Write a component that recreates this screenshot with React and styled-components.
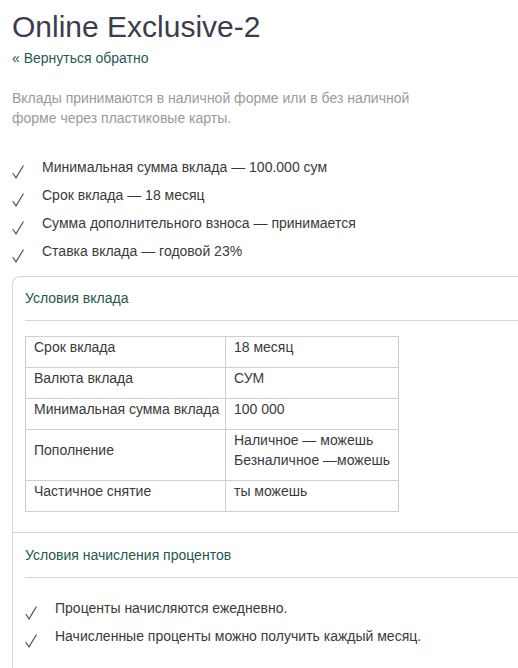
import React from "react";
import styled, { createGlobalStyle } from "styled-components";

const GlobalStyle = createGlobalStyle`
    html, body {
        margin: 0;
        padding: 0;
        background: #fff;
        overflow: hidden;
    }
    body {
        font-family: "Liberation Sans", Arial, sans-serif;
        font-size: 14px;
        color: #333;
    }
`;

const Page = styled.div`
    padding: 10px 0 20px 12px;
`;

const Title = styled.h1`
    margin: 0;
    font-size: 30px;
    line-height: 33px;
    font-weight: normal;
    color: #3c3c4c;
`;

const BackLink = styled.a`
    display: block;
    margin-top: 5px;
    font-size: 14px;
    line-height: 20px;
    color: #1f5b54;
    text-decoration: none;
`;

const Lead = styled.p`
    margin: 20px 0 0;
    max-width: 400px;
    font-size: 14px;
    line-height: 20px;
    color: #9a9a9a;
`;

const CheckList = styled.ul`
    list-style: none;
    margin: ${(p) => p.$margin || "0"};
    padding: 0;
`;

const CheckItem = styled.li`
    display: flex;
    align-items: flex-start;
    gap: 18px;
    height: 28px;
    font-size: 14px;
    line-height: 20px;
    color: #3a3a3a;
`;

const CheckIcon = styled.svg`
    flex: none;
    width: 12px;
    height: 14px;
    margin-top: 8px;
`;

const Check = () => (
    <CheckIcon viewBox="0 0 12 14">
        <path
            d="M1 8.5 L4 12.8 L11.2 1"
            fill="none"
            stroke="#4f4a78"
            strokeWidth="1.2"
            strokeLinecap="round"
        />
    </CheckIcon>
);

const Panel = styled.div`
    margin-top: 7px;
    margin-right: -40px;
    border: 1px solid #d6d6d6;
    border-right: none;
    border-radius: 8px 0 0 0;
`;

const Section = styled.div`
    padding: 0 0 0 12px;
    & + & {
        border-top: 1px solid #d6d6d6;
        padding-top: 1px;
    }
`;

const SectionHead = styled.div`
    padding: 11px 0 12px;
    border-bottom: 1px solid #d4d4d4;
    font-size: 14px;
    line-height: 20px;
    color: #24574f;
`;

const SectionBody = styled.div`
    padding: ${(p) => p.$pad || "15px 0 20px"};
`;

const Table = styled.table`
    border-collapse: collapse;
    table-layout: fixed;
    width: 374px;
`;

const Cell = styled.td`
    border: 1px solid #cfcfcf;
    padding: 0 6px 10px 8px;
    vertical-align: middle;
    width: ${(p) => p.$w || "auto"};
    white-space: nowrap;
    font-size: 14px;
    line-height: 20px;
    color: #3a3a3a;
`;

const rows = [
    ["Срок вклада", ["18 месяц"]],
    ["Валюта вклада", ["СУМ"]],
    ["Минимальная сумма вклада", ["100 000"]],
    ["Пополнение", ["Наличное — можешь", "Безналичное —можешь"]],
    ["Частичное снятие", ["ты можешь"]],
];

const features = [
    "Минимальная сумма вклада — 100.000 сум",
    "Срок вклада — 18 месяц",
    "Сумма дополнительного взноса — принимается",
    "Ставка вклада — годовой 23%",
];

const interest = [
    "Проценты начисляются ежедневно.",
    "Начисленные проценты можно получить каждый месяц.",
];

const App = () => {
    return (
        <>
            <GlobalStyle />
            <Page>
                <Title>Online Exclusive-2</Title>
                <BackLink href="#">« Вернуться обратно</BackLink>
                <Lead>
                    Вклады принимаются в наличной форме или в без наличной
                    форме через пластиковые карты.
                </Lead>
                <CheckList $margin="29px 0 0">
                    {features.map((f) => (
                        <CheckItem key={f}>
                            <Check />
                            {f}
                        </CheckItem>
                    ))}
                </CheckList>
                <Panel>
                    <Section>
                        <SectionHead>Условия вклада</SectionHead>
                        <SectionBody>
                            <Table>
                                <tbody>
                                    {rows.map(([k, v]) => (
                                        <tr key={k}>
                                            <Cell $w="185px">{k}</Cell>
                                            <Cell>
                                                {v.map((line) => (
                                                    <div key={line}>{line}</div>
                                                ))}
                                            </Cell>
                                        </tr>
                                    ))}
                                </tbody>
                            </Table>
                        </SectionBody>
                    </Section>
                    <Section>
                        <SectionHead>Условия начисления процентов</SectionHead>
                        <SectionBody $pad="20px 0 40px">
                            <CheckList>
                                {interest.map((f) => (
                                    <CheckItem key={f}>
                                        <Check />
                                        {f}
                                    </CheckItem>
                                ))}
                            </CheckList>
                        </SectionBody>
                    </Section>
                </Panel>
            </Page>
        </>
    );
};

export default App;
